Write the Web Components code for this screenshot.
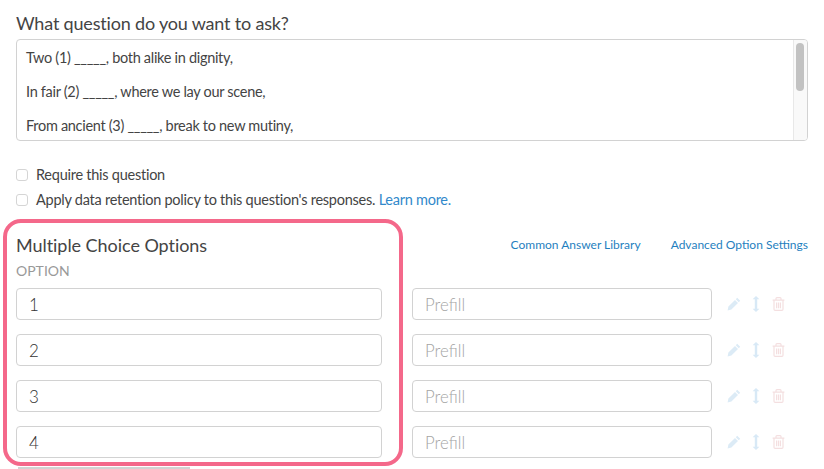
<!DOCTYPE html>
<html>
<head>
<meta charset="utf-8">
<style>
  html, body { margin: 0; height: 469px; overflow: hidden; background: #fff; }
  body { font-family: Lato, "Open Sans", sans-serif; color: #444; }
</style>
</head>
<body>
<survey-editor>
  <question-box title="What question do you want to ask?">
    <p>Two (1) _____, both alike in dignity,</p>
    <p>In fair (2) _____, where we lay our scene,</p>
    <p>From ancient (3) _____, break to new mutiny,</p>
  </question-box>
  <check-row>Require this question</check-row>
  <check-row>Apply data retention policy to this question's responses. <a style="color:#3189cb;text-decoration:none" href="#">Learn more.</a></check-row>
  <options-panel>
    <option-row value="1"></option-row>
    <option-row value="2"></option-row>
    <option-row value="3"></option-row>
    <option-row value="4"></option-row>
  </options-panel>
</survey-editor>

<script>
class SurveyEditor extends HTMLElement {
  constructor() {
    super();
    this.attachShadow({ mode: 'open' }).innerHTML = `
      <style>
        :host { display: flex; flex-direction: column; padding: 12px 16px 0; box-sizing: border-box; height: 469px; overflow: hidden; }
      </style>
      <slot></slot>`;
  }
}

class QuestionBox extends HTMLElement {
  constructor() {
    super();
    this.attachShadow({ mode: 'open' }).innerHTML = `
      <style>
        :host { display: block; margin-bottom: 21px; }
        h2 { font-size: 18px; line-height: 22px; font-weight: 400; letter-spacing: -0.18px; margin: 0 0 5px; color: #444; }
        .box { height: 102px; box-sizing: border-box; border: 1px solid #d2d2d2; border-radius: 4px; display: flex; overflow: hidden; }
        .text { flex: 1; padding: 8px 9px 0; font-size: 14.5px; line-height: 20px; letter-spacing: -0.3px; color: #444; }
        ::slotted(p) { margin: 0 0 14px; }
        .track { width: 14px; background: #f9f9f9; border-left: 1px solid #e8e8e8; padding: 3px 3px 3px 2px; box-sizing: border-box; }
        .thumb { height: 48px; border-radius: 4px; background: #c2c2c2; }
      </style>
      <h2></h2>
      <div class="box">
        <div class="text"><slot></slot></div>
        <div class="track"><div class="thumb"></div></div>
      </div>`;
    this.shadowRoot.querySelector('h2').textContent = this.getAttribute('title');
  }
}

class CheckRow extends HTMLElement {
  constructor() {
    super();
    this.attachShadow({ mode: 'open' }).innerHTML = `
      <style>
        :host { display: flex; align-items: center; gap: 8px; height: 25px; font-size: 14.5px; letter-spacing: -0.25px; color: #444; }
        .box { width: 12px; height: 12px; border: 1px solid #d5d5d5; border-radius: 3px; box-sizing: border-box; flex: none; }
      </style>
      <span class="box"></span><span><slot></slot></span>`;
  }
}

class OptionsPanel extends HTMLElement {
  constructor() {
    super();
    this.attachShadow({ mode: 'open' }).innerHTML = `
      <style>
        :host { display: block; position: relative; margin-top: 17px; }
        .head { display: flex; align-items: center; height: 30px; }
        h3 { flex: 1; font-size: 18px; line-height: 24px; font-weight: 400; letter-spacing: -0.05px; margin: 2px 0 0; color: #444; }
        a { font-size: 12px; color: #1f7fc0; text-decoration: none; margin-left: 30px; }
        .label { font-size: 14px; line-height: 16px; color: #999; margin: 4px 0 9px; }
        .ring { position: absolute; left: -13px; top: -10px; width: 400px; height: 247px; box-sizing: border-box; border: 4px solid #f4688a; border-radius: 18px; pointer-events: none; }
        .stub { width: 172px; height: 2px; margin: 9px 0 0 2px; background: #d2d2d2; }
        .rows { display: flex; flex-direction: column; gap: 14px; }
      </style>
      <div class="head">
        <h3>Multiple Choice Options</h3>
        <a href="#">Common Answer Library</a>
        <a href="#">Advanced Option Settings</a>
      </div>
      <div class="label">OPTION</div>
      <div class="rows"><slot></slot></div>
      <div class="stub"></div>
      <div class="ring"></div>`;
  }
}

class OptionRow extends HTMLElement {
  constructor() {
    super();
    this.attachShadow({ mode: 'open' }).innerHTML = `
      <style>
        :host { display: flex; align-items: center; height: 32px; }
        .field { box-sizing: border-box; height: 32px; border: 1px solid #d2d2d2; border-radius: 4px; display: flex; align-items: center; padding-left: 12px; font-size: 17px; font-weight: 300; color: #333; }
        .value { width: 366px; }
        .prefill { width: 300px; margin-left: 30px; color: #a4a4a4; font-size: 16.8px; }
        .icons { display: flex; align-items: center; margin-left: 15px; }
        svg { display: block; }
      </style>
      <div class="field value"></div>
      <div class="field prefill">Prefill</div>
      <div class="icons">
        <svg width="14" height="14" viewBox="0 0 14 14"><path fill="#dcebf6" d="M10.2.8 13.2 3.8 11.8 5.2 8.8 2.2zM8 3 11 6 4.4 12.6.6 13.4 1.4 9.6z"/></svg>
        <svg style="margin-left:11px" width="8" height="16" viewBox="0 0 8 16"><path fill="#d8e9f6" d="M4 0 7.4 3.2H5.2V12.8H7.4L4 16 .6 12.8H2.8V3.2H.6z"/></svg>
        <svg style="margin-left:12px" width="13" height="14" viewBox="0 0 13 14"><path fill="none" stroke="#f4dfe0" stroke-width="1.2" d="M2 3.6V12.2Q2 13.3 3.1 13.3H9.9Q11 13.3 11 12.2V3.6M.6 3.2H12.4M4 3V1.6Q4 .7 4.9.7H8.1Q9 .7 9 1.6V3M4.6 5.4V11.2M6.5 5.4V11.2M8.4 5.4V11.2"/></svg>
      </div>`;
    this.shadowRoot.querySelector('.value').textContent = this.getAttribute('value');
  }
}

customElements.define('survey-editor', SurveyEditor);
customElements.define('question-box', QuestionBox);
customElements.define('check-row', CheckRow);
customElements.define('options-panel', OptionsPanel);
customElements.define('option-row', OptionRow);
</script>
</body>
</html>
